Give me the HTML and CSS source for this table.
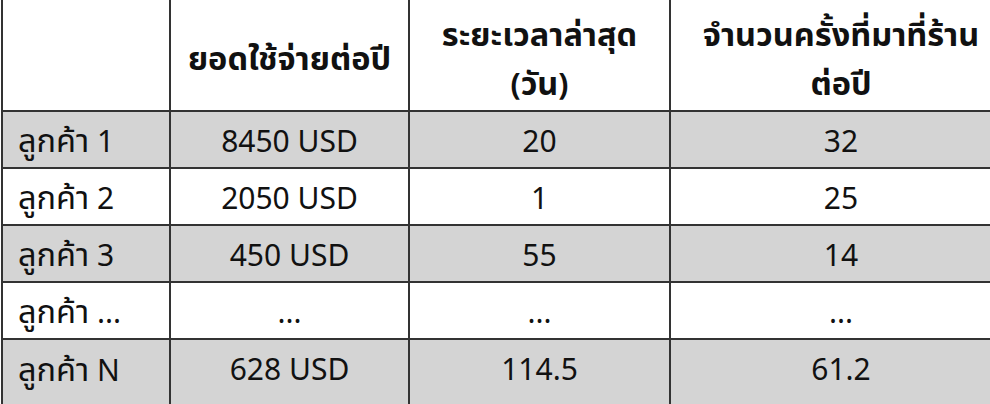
FILE: index.html
```html
<!DOCTYPE html>
<html lang="th">
<head>
<meta charset="utf-8">
<link rel="stylesheet" href="styles.css">
</head>
<body>
<div class="frame">
<table class="grid">
  <colgroup>
    <col class="c1"><col class="c2"><col class="c3"><col class="c4">
  </colgroup>
  <thead>
    <tr class="head">
      <th></th>
      <th><span class="th">ยอดใช้จ่ายต่อปี</span></th>
      <th><span class="th">ระยะเวลาล่าสุด</span><br>(<span class="th">วัน</span>)</th>
      <th><span class="th">จำนวนครั้งที่มาที่ร้าน</span><br><span class="th">ต่อปี</span></th>
    </tr>
  </thead>
  <tbody>
    <tr class="shade"><td class="name"><span class="th">ลูกค้า</span> 1</td><td>8450 USD</td><td>20</td><td>32</td></tr>
    <tr><td class="name"><span class="th">ลูกค้า</span> 2</td><td>2050 USD</td><td>1</td><td>25</td></tr>
    <tr class="shade"><td class="name"><span class="th">ลูกค้า</span> 3</td><td>450 USD</td><td>55</td><td>14</td></tr>
    <tr><td class="name"><span class="th">ลูกค้า</span> ...</td><td>...</td><td>...</td><td>...</td></tr>
    <tr class="shade last"><td class="name"><span class="th">ลูกค้า</span> N</td><td>628 USD</td><td>114.5</td><td>61.2</td></tr>
  </tbody>
</table>
</div>
</body>
</html>
```
FILE: styles.css
```css
html, body {
  margin: 0;
  padding: 0;
  background: #ffffff;
}
.frame {
  width: 990px;
  height: 404px;
  overflow: hidden;
}
.grid {
  border-collapse: collapse;
  table-layout: fixed;
  width: 1010px;
  margin-left: 1px;
  margin-top: 0;
  font-family: "Noto Sans", "Noto Sans Thai", "Leelawadee UI", sans-serif;
  color: #111111;
}
.c1 { width: 168px; }
.c2 { width: 239px; }
.c3 { width: 261px; }
.c4 { width: 342px; }
.grid th, .grid td {
  border: 2px solid #333333;
  text-align: center;
  padding: 0;
  font-size: 30px;
}
.grid thead th {
  border-top: none;
}
.th {
  font-size: 32.5px;
}
.grid th {
  font-weight: bold;
  height: 111px;
  line-height: 48px;
  padding-top: 7px;
  box-sizing: border-box;
}
.grid td {
  height: 57px;
  line-height: 40px;
  box-sizing: border-box;
  padding-top: 2px;
}
.grid td.name {
  text-align: left;
  padding-left: 15px;
}
.shade td {
  background: #d4d4d4;
}
.last td {
  height: 70px;
  padding-bottom: 12px;
}
```
